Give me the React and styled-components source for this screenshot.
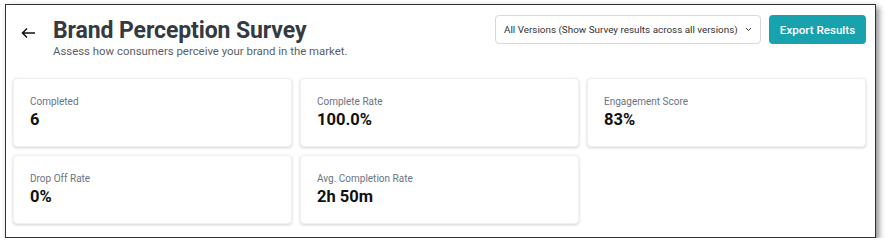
import React from "react";
import styled, { createGlobalStyle } from "styled-components";

const Global = createGlobalStyle`
  html, body { margin: 0; padding: 0; background: #ffffff; }
  body { font-family: Roboto, "Liberation Sans", Arial, sans-serif; }
  * { box-sizing: border-box; }
`;

const Frame = styled.div`
  margin: 4px 0 0 5px;
  width: 871px;
  height: 234px;
  border: 1.5px solid #333;
  background: #fff;
  box-shadow: 3px 3px 6px rgba(0, 0, 0, 0.45);
  padding: 10px 9px 0 7px;
`;

const Header = styled.header`
  display: flex;
  justify-content: space-between;
  align-items: flex-start;
`;

const TitleWrap = styled.div`
  display: flex;
  align-items: flex-start;
  padding-left: 8px;
  padding-top: 2px;
`;

const Back = styled.button`
  border: none;
  background: none;
  padding: 0;
  margin-top: 8px;
  width: 16px;
  height: 16px;
  display: flex;
  align-items: center;
  cursor: pointer;
  color: #111;
`;

const TitleBlock = styled.div`
  margin-left: 16px;
  display: flex;
  flex-direction: column;
`;

const Title = styled.h1`
  margin: 0;
  font-size: 23px;
  line-height: 27px;
  font-weight: 700;
  color: #343a42;
  letter-spacing: -0.1px;
`;

const Subtitle = styled.p`
  margin: 0;
  font-size: 11.4px;
  line-height: 14px;
  color: #5a5f66;
`;

const Actions = styled.div`
  display: flex;
  gap: 8px;
  align-items: center;
`;

const Select = styled.div`
  height: 29px;
  width: 266px;
  border: 1px solid #d6d9dd;
  border-radius: 4px;
  display: flex;
  align-items: center;
  padding: 0 0 0 8px;
  font-size: 9.9px;
  color: #333;
  background: #fff;
  white-space: nowrap;
`;

const SelectText = styled.span`
  flex: 1;
  min-width: 0;
  overflow: hidden;
`;

const Chevron = styled.svg`
  flex-shrink: 0;
  margin: 0 8px 0 6px;
`;

const Button = styled.button`
  height: 29px;
  width: 97px;
  border: none;
  border-radius: 4px;
  background: #17a2ad;
  color: #fff;
  font-family: inherit;
  font-size: 11.6px;
  font-weight: 500;
  padding: 0;
`;

const Grid = styled.div`
  margin-top: 20px;
  display: grid;
  grid-template-columns: repeat(3, 279px);
  grid-auto-rows: 69px;
  gap: 8px;
`;

const Card = styled.div`
  background: #fff;
  border-radius: 4px;
  border: 1px solid #eef0f2;
  box-shadow: 0 1px 3px rgba(0, 0, 0, 0.18);
  padding: 16px 16px 0;
`;

const Label = styled.div`
  font-size: 10px;
  line-height: 13px;
  color: #6b7384;
`;

const Value = styled.div`
  margin-top: 2px;
  font-size: 16.5px;
  line-height: 20px;
  font-weight: 700;
  color: #111;
`;

const stats = [
  { label: "Completed", value: "6" },
  { label: "Complete Rate", value: "100.0%" },
  { label: "Engagement Score", value: "83%" },
  { label: "Drop Off Rate", value: "0%" },
  { label: "Avg. Completion Rate", value: "2h 50m" },
];

export default function App() {
  return (
    <>
      <Global />
      <Frame>
        <Header>
          <TitleWrap>
            <Back aria-label="Back">
              <svg width="15" height="12" viewBox="0 0 15 12" fill="none">
                <path d="M14 6H1.5M6 1.5L1.5 6L6 10.5" stroke="#111" strokeWidth="1.5" />
              </svg>
            </Back>
            <TitleBlock>
              <Title>Brand Perception Survey</Title>
              <Subtitle>Assess how consumers perceive your brand in the market.</Subtitle>
            </TitleBlock>
          </TitleWrap>
          <Actions>
            <Select>
              <SelectText>All Versions (Show Survey results across all versions)</SelectText>
              <Chevron width="7" height="5" viewBox="0 0 7 5" fill="none">
                <path d="M1 1l2.5 2.5L6 1" stroke="#444" strokeWidth="1" />
              </Chevron>
            </Select>
            <Button>Export Results</Button>
          </Actions>
        </Header>
        <Grid>
          {stats.map((s) => (
            <Card key={s.label}>
              <Label>{s.label}</Label>
              <Value>{s.value}</Value>
            </Card>
          ))}
        </Grid>
      </Frame>
    </>
  );
}
